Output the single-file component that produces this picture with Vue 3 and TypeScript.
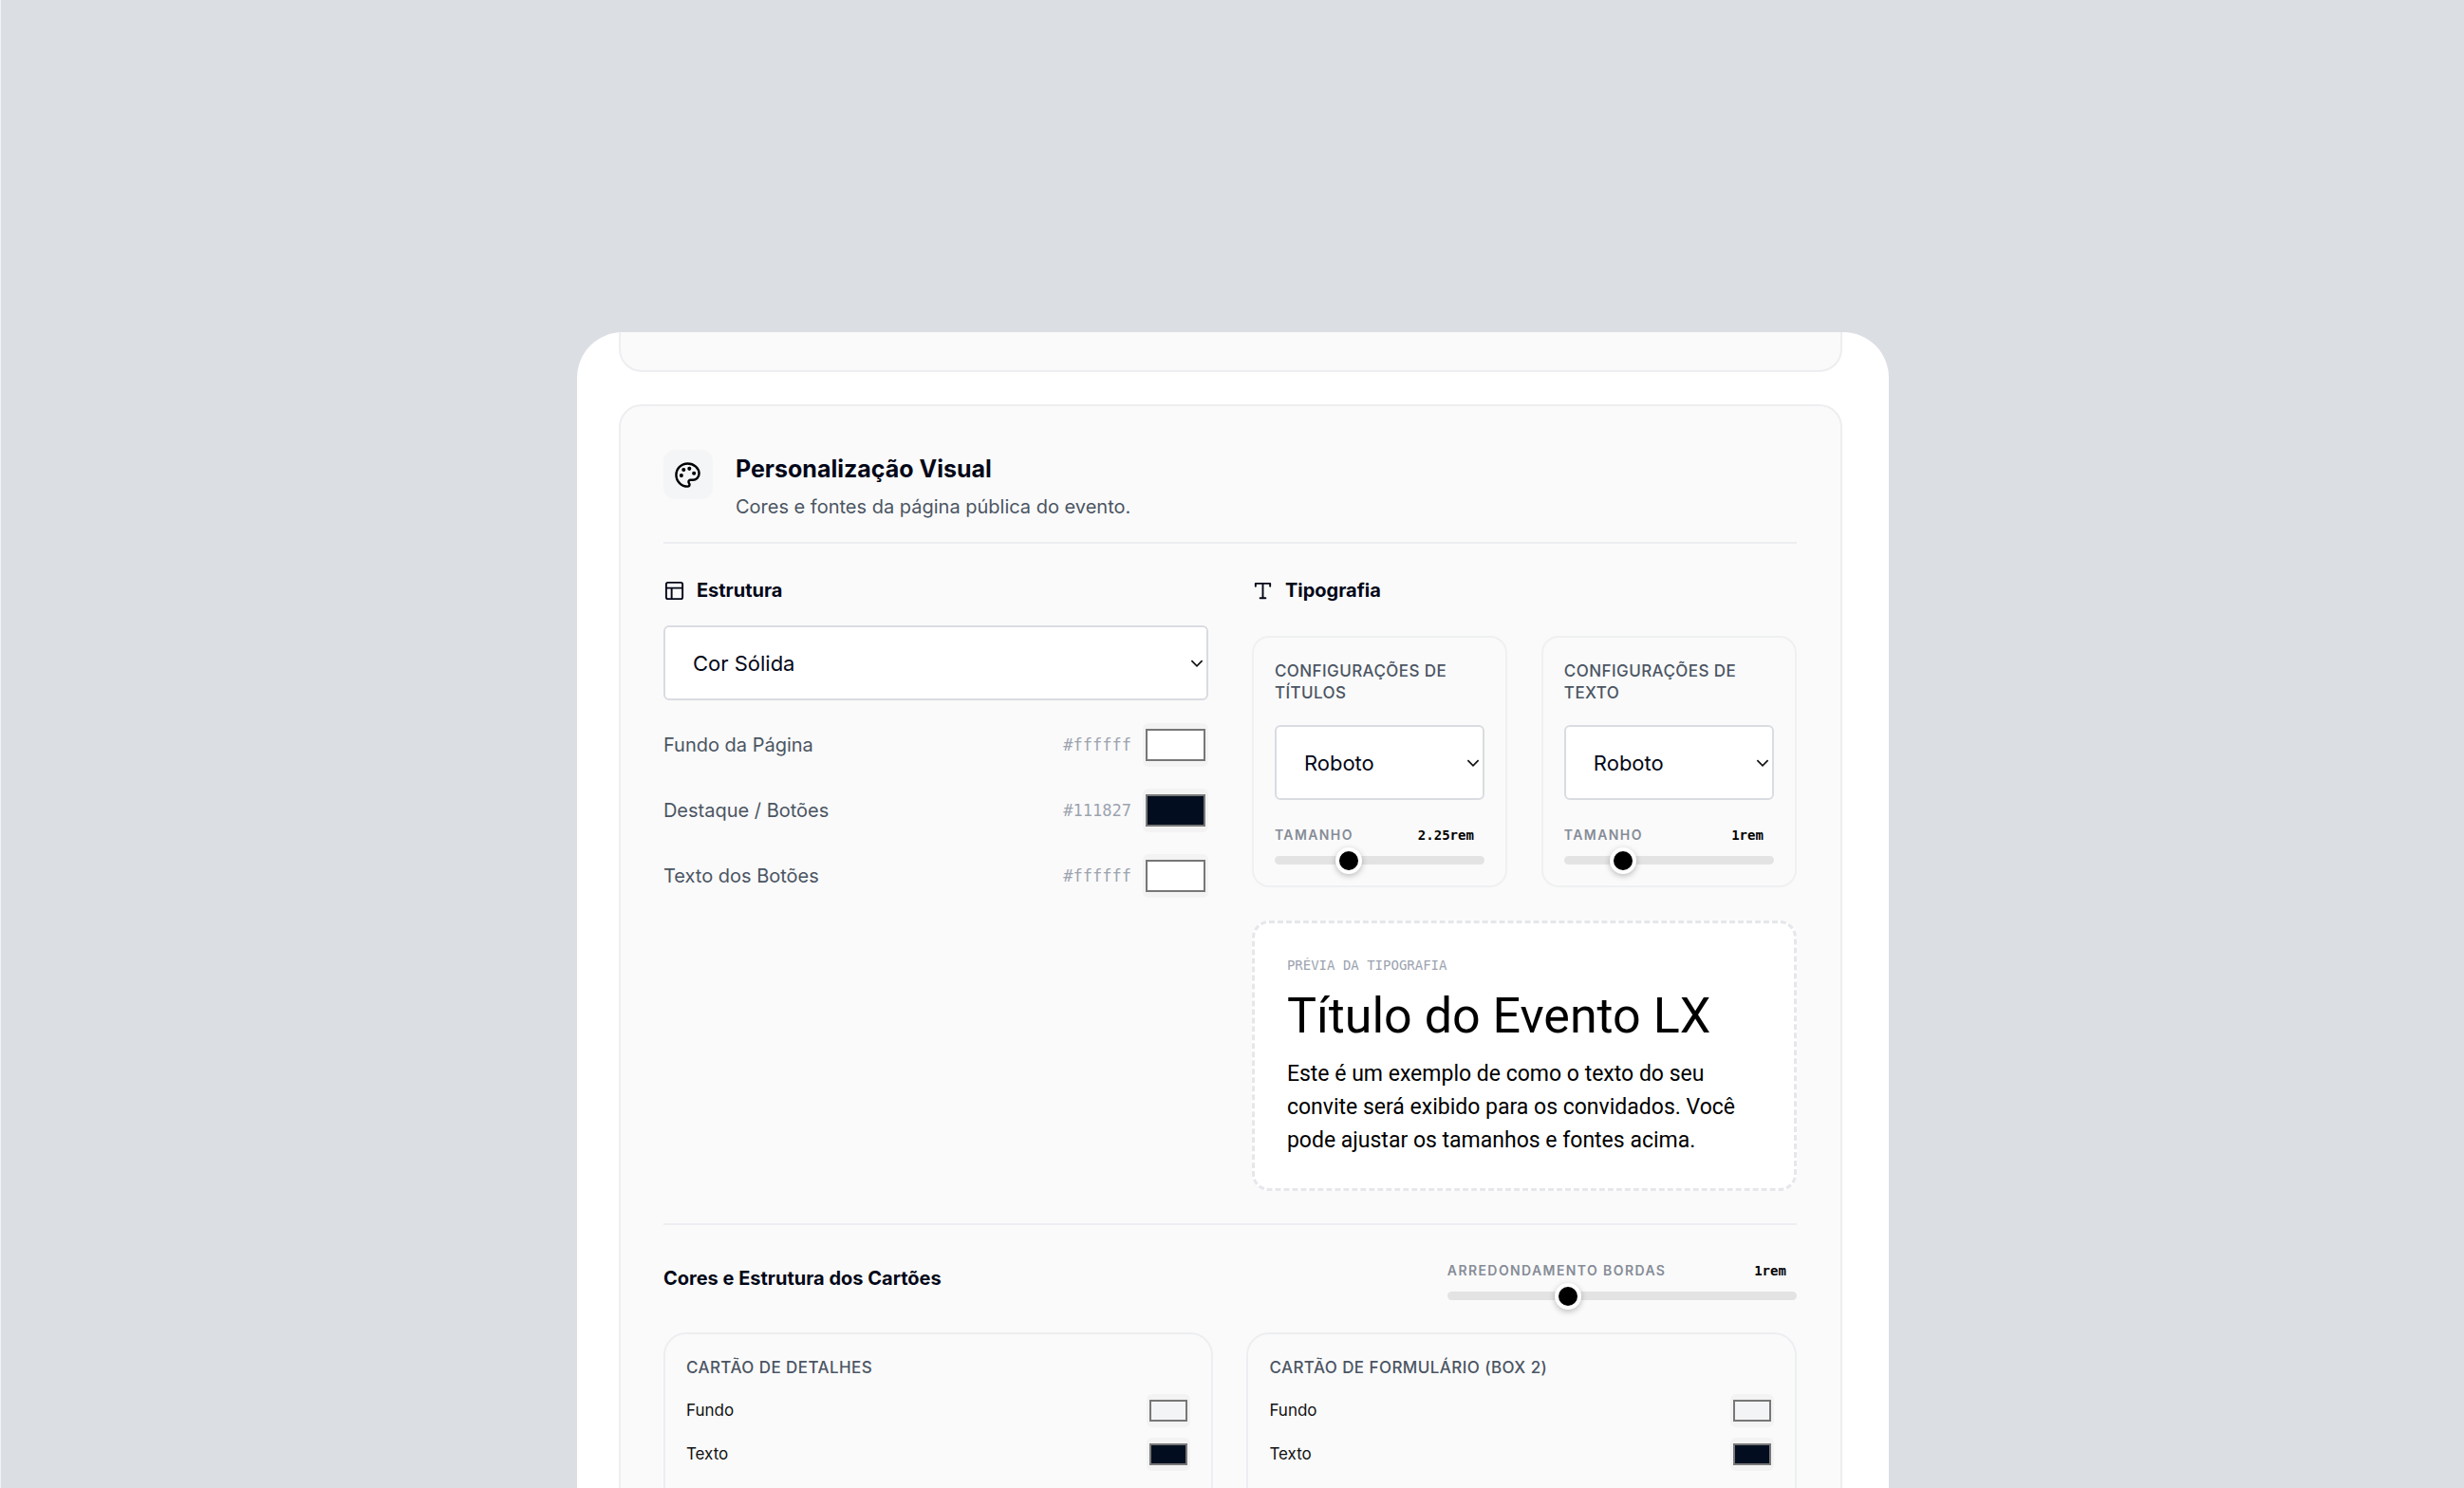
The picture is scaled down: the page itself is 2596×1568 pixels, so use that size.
<script setup lang="ts">
import { reactive, ref } from 'vue'

interface ColorRow {
  id: string
  label: string
  hex: string
  color: string
}

interface FontCard {
  id: string
  title: string
  font: string
  size: number
  min: number
  max: number
}

const background = ref('Cor Sólida')
const radius = ref(1)

const pageColors = reactive<ColorRow[]>([
  { id: 'page-bg', label: 'Fundo da Página', hex: '#ffffff', color: '#ffffff' },
  { id: 'accent', label: 'Destaque / Botões', hex: '#111827', color: '#020e1f' },
  { id: 'button-text', label: 'Texto dos Botões', hex: '#ffffff', color: '#ffffff' },
])

const fontCards = reactive<FontCard[]>([
  { id: 'title-font', title: 'Configurações de Títulos', font: 'Roboto', size: 2.25, min: 1, max: 4.75 },
  { id: 'text-font', title: 'Configurações de Texto', font: 'Roboto', size: 1, min: 0.75, max: 1.75 },
])

const boxes = reactive([
  {
    id: 'details',
    title: 'Cartão de Detalhes',
    colors: [
      { id: 'details-bg', label: 'Fundo', color: '#f3f4f6' },
      { id: 'details-text', label: 'Texto', color: '#020e1f' },
    ],
  },
  {
    id: 'form',
    title: 'Cartão de Formulário (Box 2)',
    colors: [
      { id: 'form-bg', label: 'Fundo', color: '#f3f4f6' },
      { id: 'form-text', label: 'Texto', color: '#020e1f' },
    ],
  },
])
</script>

<template>
  <main class="stage">
    <div class="panel">
      <div class="section section-previous"></div>

      <section class="section">
        <header class="section-header">
          <span class="header-icon">
            <svg viewBox="0 0 24 24" class="icon">
              <circle cx="13.5" cy="6.5" r=".7" fill="currentColor" />
              <circle cx="17.5" cy="10.5" r=".7" fill="currentColor" />
              <circle cx="8.5" cy="7.5" r=".7" fill="currentColor" />
              <circle cx="6.5" cy="12.5" r=".7" fill="currentColor" />
              <path d="M12 2C6.5 2 2 6.5 2 12s4.500 10 10 10c.926 0 1.648-.746 1.648-1.688 0-.437-.18-.835-.437-1.125-.29-.289-.438-.652-.438-1.125a1.640 1.640 0 0 1 1.668-1.668h1.996c3.051 0 5.555-2.503 5.555-5.554C21.965 6.012 17.461 2 12 2z" />
            </svg>
          </span>
          <div>
            <h2>Personalização Visual</h2>
            <p>Cores e fontes da página pública do evento.</p>
          </div>
        </header>

        <div class="columns">
          <div class="column">
            <h3>
              <svg viewBox="0 0 24 24" class="icon">
                <rect x="3" y="3" width="18" height="18" rx="2" />
                <path d="M3 9h18M9 21V9" />
              </svg>
              Estrutura
            </h3>
            <div class="select-wrap select-main">
              <select v-model="background" aria-label="Tipo de fundo">
                <option>Cor Sólida</option>
              </select>
              <svg viewBox="0 0 12 8" class="chevron"><path d="M1 1l5 5 5-5" /></svg>
            </div>
            <div v-for="row in pageColors" :key="row.id" class="color-row">
              <label :for="row.id">{{ row.label }}</label>
              <span class="hex">{{ row.hex }}</span>
              <input :id="row.id" v-model="row.color" type="color" class="swatch" />
            </div>
          </div>

          <div class="column">
            <h3>
              <svg viewBox="0 0 24 24" class="icon">
                <path d="M4 7V4h16v3M9 20h6M12 4v16" />
              </svg>
              Tipografia
            </h3>
            <div class="font-cards">
              <div v-for="card in fontCards" :key="card.id" class="font-card">
                <h4>{{ card.title }}</h4>
                <div class="select-wrap">
                  <select v-model="card.font" :aria-label="card.title">
                    <option>Roboto</option>
                  </select>
                  <svg viewBox="0 0 12 8" class="chevron"><path d="M1 1l5 5 5-5" /></svg>
                </div>
                <div class="range-head">
                  <label :for="card.id">Tamanho</label>
                  <output :for="card.id">{{ card.size }}rem</output>
                </div>
                <input
                  :id="card.id"
                  v-model.number="card.size"
                  type="range"
                  :min="card.min"
                  :max="card.max"
                  step="0.125"
                />
              </div>
            </div>
            <div class="preview">
              <span class="preview-label">Prévia da Tipografia</span>
              <p class="preview-title">Título do Evento LX</p>
              <p class="preview-text">
                Este é um exemplo de como o texto do seu convite será exibido para os convidados. Você
                pode ajustar os tamanhos e fontes acima.
              </p>
            </div>
          </div>
        </div>

        <div class="boxes-head">
          <h3>Cores e Estrutura dos Cartões</h3>
          <div class="radius-control">
            <div class="range-head">
              <label for="radius">Arredondamento Bordas</label>
              <output for="radius">{{ radius }}rem</output>
            </div>
            <input id="radius" v-model.number="radius" type="range" min="0" max="3" step="0.125" />
          </div>
        </div>

        <div class="boxes">
          <div v-for="box in boxes" :key="box.id" class="box">
            <h4>{{ box.title }}</h4>
            <div v-for="row in box.colors" :key="row.id" class="box-row">
              <label :for="row.id">{{ row.label }}</label>
              <input :id="row.id" v-model="row.color" type="color" class="swatch swatch-small" />
            </div>
          </div>
        </div>
      </section>
    </div>
  </main>
</template>

<style>
html,
body,
#app {
  height: 100%;
}

body {
  margin: 0;
  overflow: hidden;
}
</style>

<style scoped>
* {
  box-sizing: border-box;
}

.stage {
  height: 100%;
  padding: 350px 23.35% 0 23.38%;
  overflow: hidden;
  border-left: 1px solid #f1f3f5;
  background: #dbdee3;
  color: #030718;
  font-family: Inter, 'Noto Sans', sans-serif;
}

.panel {
  height: 100%;
  padding: 0 49px 0 44px;
  overflow: hidden;
  background: #fff;
  border-radius: 48px 48px 0 0;
}

.section {
  padding: 46px 46px 46px 45px;
  background: #fafafa;
  border: 2px solid #eceef1;
  border-radius: 24px;
}

.section-previous {
  height: 42px;
  margin-bottom: 34px;
  padding: 0;
  border-top: 0;
  border-radius: 0 0 24px 24px;
}

h2,
h3,
h4,
p {
  margin: 0;
}

.icon {
  fill: none;
  stroke: currentColor;
  stroke-width: 2;
  stroke-linecap: round;
  stroke-linejoin: round;
}

.section-header {
  display: flex;
  align-items: flex-start;
  gap: 24px;
  padding-bottom: 22px;
  border-bottom: 2px solid #eceef1;
}

.header-icon {
  display: flex;
  align-items: center;
  justify-content: center;
  width: 52px;
  height: 52px;
  border-radius: 12px;
  background: #f4f5f7;
  color: #000;
}

.header-icon .icon {
  width: 29px;
  height: 29px;
}

h2 {
  font-size: 25px;
  font-weight: 700;
  line-height: 40px;
}

.section-header p {
  margin-top: 6px;
  color: #4b5563;
  font-size: 20px;
  line-height: 29px;
}

.columns {
  display: grid;
  grid-template-columns: 1fr 1fr;
  gap: 46px;
  padding: 35px 0 34px;
  border-bottom: 2px solid #eceef1;
}

h3 {
  display: flex;
  align-items: center;
  gap: 12px;
  font-size: 20px;
  font-weight: 700;
  line-height: 29px;
}

h3 .icon {
  width: 23px;
  height: 23px;
}

.select-wrap {
  position: relative;
}

.select-main {
  margin: 22px 0 12px;
}

select {
  display: block;
  width: 100%;
  height: 79px;
  padding: 0 29px;
  border: 2px solid #d9dce1;
  border-radius: 6px;
  background: #fff;
  color: #030718;
  font: 22px Inter, 'Noto Sans', sans-serif;
  appearance: none;
}

.chevron {
  position: absolute;
  top: 50%;
  right: 5px;
  width: 14px;
  height: 9px;
  margin-top: -4px;
  fill: none;
  stroke: #111;
  stroke-width: 1.5;
  pointer-events: none;
}

.color-row {
  display: flex;
  align-items: center;
  height: 69px;
  color: #4b5563;
  font-size: 20px;
}

.hex {
  margin: 0 12px 0 auto;
  color: #9ca3af;
  font-family: 'DejaVu Sans Mono', monospace;
  font-size: 17px;
}

.swatch {
  display: block;
  width: 69px;
  height: 46px;
  padding: 6px 3px;
  border: 0;
  border-radius: 6px;
  background: #f3f3f4;
  appearance: none;
}

.swatch::-webkit-color-swatch-wrapper {
  padding: 0;
}

.swatch::-webkit-color-swatch {
  border: 2px solid #777;
  border-radius: 0;
}

.font-cards {
  display: grid;
  grid-template-columns: 1fr 1fr;
  gap: 36px;
  margin: 33px 0 35px;
}

.font-card {
  padding: 24px 22px 22px;
  border: 2px solid #eff0f2;
  border-radius: 18px;
}

h4 {
  color: #4b5563;
  font-size: 17px;
  font-weight: 500;
  line-height: 23px;
  letter-spacing: 0.025em;
  text-transform: uppercase;
}

.font-card .select-wrap {
  margin: 22px 0 23px;
}

.range-head {
  display: flex;
  justify-content: space-between;
  padding-right: 11px;
  font-size: 14px;
  line-height: 28px;
}

.range-head label {
  color: #868c97;
  font-weight: 600;
  letter-spacing: 0.1em;
  text-transform: uppercase;
}

.range-head output {
  color: #000;
  font-family: 'DejaVu Sans Mono', monospace;
  font-weight: 700;
}

input[type='range'] {
  display: block;
  width: 100%;
  height: 9px;
  margin: 8px 0 0;
  border-radius: 5px;
  background: #e3e3e4;
  appearance: none;
}

input[type='range']::-webkit-slider-thumb {
  width: 28px;
  height: 28px;
  border: 4px solid #fff;
  border-radius: 50%;
  background: #000;
  box-shadow: 0 2px 6px rgb(0 0 0 / 25%);
  appearance: none;
}

.preview {
  padding: 33px 34px;
  border: 3px dashed #e5e7eb;
  border-radius: 18px;
  background: #fff;
  color: #000;
  font-family: Roboto, sans-serif;
}

.preview-label {
  display: block;
  color: #9ca3af;
  font-family: 'DejaVu Sans Mono', monospace;
  font-size: 14px;
  line-height: 22px;
  text-transform: uppercase;
}

.preview-title {
  margin: 11px 0;
  font-size: 52px;
  line-height: 64px;
}

.preview-text {
  font-size: 23px;
  line-height: 35px;
}

.boxes-head {
  display: flex;
  align-items: center;
  justify-content: space-between;
  padding: 34px 0;
}

.radius-control {
  width: 368px;
}

.boxes {
  display: grid;
  grid-template-columns: 1fr 1fr;
  gap: 35px;
}

.box {
  padding: 24px 22px 48px;
  border: 2px solid #eceef1;
  border-radius: 24px;
}

.box h4 {
  margin-bottom: 10px;
}

.box-row {
  display: flex;
  align-items: center;
  justify-content: space-between;
  height: 46px;
  color: #111;
  font-size: 17px;
}

.swatch-small {
  width: 46px;
  height: 35px;
}
</style>
